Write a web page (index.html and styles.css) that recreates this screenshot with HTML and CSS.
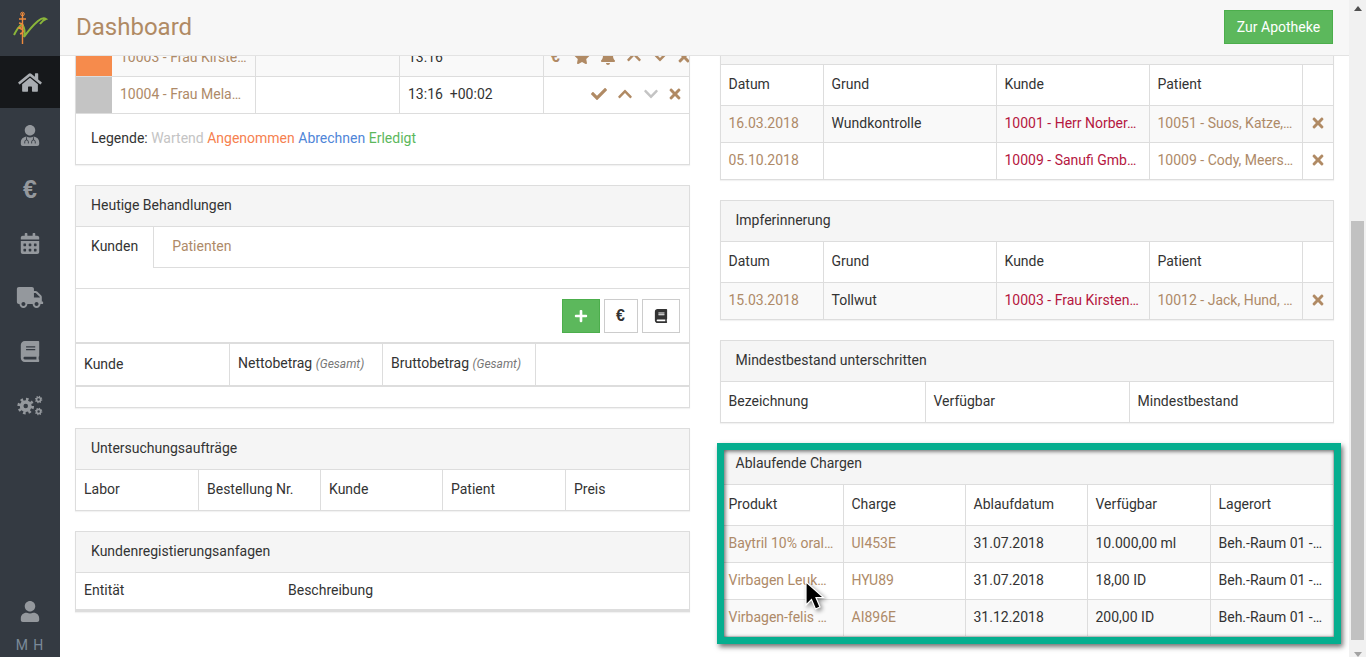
FILE: index.html
```html
<!DOCTYPE html>
<html lang="de">
<head>
    <meta charset="UTF-8">
    <meta name="viewport" content="width=device-width, initial-scale=1.0">
    <title>Dashboard</title>
    <link rel="stylesheet" href="styles.css">
</head>
<body>
    <svg class="defs" aria-hidden="true">
        <symbol id="i-check" viewBox="0 0 512 512"><path d="M173.898 439.404l-166.4-166.4c-9.997-9.997-9.997-26.206 0-36.204l36.203-36.204c9.997-9.998 26.207-9.998 36.204 0L192 312.69 432.095 72.596c9.997-9.997 26.207-9.997 36.204 0l36.203 36.204c9.997 9.997 9.997 26.206 0 36.204l-294.4 294.401c-9.998 9.997-26.207 9.997-36.204-.001z"/></symbol>
        <symbol id="i-times" viewBox="0 0 352 512"><path d="M242.72 256l100.07-100.07c12.28-12.28 12.28-32.19 0-44.48l-22.24-22.24c-12.28-12.28-32.19-12.28-44.48 0L176 189.28 75.93 89.21c-12.28-12.28-32.19-12.28-44.48 0L9.21 111.45c-12.28 12.28-12.28 32.19 0 44.48L109.28 256 9.21 356.07c-12.28 12.28-12.28 32.19 0 44.48l22.24 22.24c12.28 12.28 32.2 12.28 44.48 0L176 322.72l100.07 100.07c12.28 12.28 32.2 12.28 44.48 0l22.24-22.24c12.28-12.28 12.28-32.19 0-44.48L242.72 256z"/></symbol>
        <symbol id="i-up" viewBox="0 0 448 512"><path d="M240.971 130.524l194.343 194.343c9.373 9.373 9.373 24.569 0 33.941l-22.667 22.667c-9.357 9.357-24.522 9.375-33.901.04L224 227.495 69.255 381.516c-9.379 9.335-24.544 9.317-33.901-.04l-22.667-22.667c-9.373-9.373-9.373-24.569 0-33.941L207.03 130.525c9.372-9.373 24.568-9.373 33.941-.001z"/></symbol>
        <symbol id="i-down" viewBox="0 0 448 512"><path d="M207.029 381.476L12.686 187.132c-9.373-9.373-9.373-24.569 0-33.941l22.667-22.667c9.357-9.357 24.522-9.375 33.901-.04L224 284.505l154.745-154.021c9.379-9.335 24.544-9.317 33.901.04l22.667 22.667c9.373 9.373 9.373 24.569 0 33.941L240.971 381.476c-9.373 9.372-24.569 9.372-33.942 0z"/></symbol>
        <symbol id="i-plus" viewBox="0 0 448 512"><path d="M416 208H272V64c0-17.67-14.33-32-32-32h-32c-17.67 0-32 14.33-32 32v144H32c-17.67 0-32 14.33-32 32v32c0 17.67 14.33 32 32 32h144v144c0 17.67 14.33 32 32 32h32c17.67 0 32-14.33 32-32V304h144c17.67 0 32-14.33 32-32v-32c0-17.67-14.33-32-32-32z"/></symbol>
        <symbol id="i-star" viewBox="0 0 576 512"><path d="M259.3 17.8L194 150.2 47.9 171.5c-26.2 3.8-36.7 36.1-17.7 54.6l105.7 103-25 145.5c-4.5 26.3 23.2 46 46.4 33.7L288 439.6l130.7 68.7c23.2 12.2 50.9-7.4 46.4-33.7l-25-145.5 105.7-103c19-18.5 8.5-50.8-17.7-54.6L382 150.2 316.7 17.8c-11.7-23.6-45.6-23.9-57.4 0z"/></symbol>
        <symbol id="i-bell" viewBox="0 0 448 512"><path d="M224 512c35.32 0 63.97-28.65 63.97-64H160.03c0 35.35 28.65 64 63.97 64zm215.39-149.71c-19.32-20.76-55.47-51.99-55.47-154.29 0-77.7-54.48-139.9-127.94-155.16V32c0-17.67-14.32-32-31.98-32s-31.98 14.33-31.98 32v20.84C118.56 68.1 64.08 130.3 64.08 208c0 102.3-36.15 133.53-55.47 154.29-6 6.45-8.66 14.16-8.61 21.71.11 16.4 12.98 32 32.1 32h383.8c19.12 0 32-15.6 32.1-32 .05-7.55-2.61-15.27-8.61-21.71z"/></symbol>
        <symbol id="i-book" viewBox="0 0 448 512"><path d="M448 360V24c0-13.3-10.7-24-24-24H96C43 0 0 43 0 96v320c0 53 43 96 96 96h328c13.3 0 24-10.7 24-24v-16c0-7.5-3.5-14.3-8.9-18.7-4.2-15.4-4.2-59.3 0-74.7 5.4-4.3 8.9-11.1 8.9-18.6zM128 134c0-3.3 2.7-6 6-6h212c3.3 0 6 2.7 6 6v20c0 3.3-2.7 6-6 6H134c-3.3 0-6-2.7-6-6v-20zm0 64c0-3.3 2.7-6 6-6h212c3.3 0 6 2.7 6 6v20c0 3.3-2.7 6-6 6H134c-3.3 0-6-2.7-6-6v-20zm253.4 250H96c-17.7 0-32-14.3-32-32 0-17.6 14.4-32 32-32h285.4c-1.9 17.1-1.9 46.9 0 64z"/></symbol>
        <symbol id="i-home" viewBox="0 0 576 512"><path d="M280.37 148.26L96 300.11V464a16 16 0 0 0 16 16l112.06-.29a16 16 0 0 0 15.92-16V368a16 16 0 0 1 16-16h64a16 16 0 0 1 16 16v95.64a16 16 0 0 0 16 16.05L464 480a16 16 0 0 0 16-16V300L295.67 148.26a12.19 12.19 0 0 0-15.3 0zM571.6 251.47L488 182.56V44.05a12 12 0 0 0-12-12h-56a12 12 0 0 0-12 12v72.61L318.47 43a48 48 0 0 0-61 0L4.34 251.47a12 12 0 0 0-1.6 16.9l25.5 31A12 12 0 0 0 45.15 301l235.22-193.74a12.19 12.19 0 0 1 15.3 0L530.9 301a12 12 0 0 0 16.9-1.6l25.5-31a12 12 0 0 0-1.7-16.93z"/></symbol>
        <symbol id="i-user" viewBox="0 0 448 512"><path d="M224 256c70.7 0 128-57.3 128-128S294.7 0 224 0 96 57.3 96 128s57.3 128 128 128zm89.6 32h-16.7c-22.2 10.2-46.9 16-72.9 16s-50.6-5.8-72.9-16h-16.7C60.2 288 0 348.2 0 422.4V464c0 26.5 21.5 48 48 48h352c26.5 0 48-21.5 48-48v-41.6c0-74.2-60.2-134.4-134.4-134.4z"/></symbol>
        <symbol id="i-doctor" viewBox="0 0 448 512">
            <path d="M224 256c70.7 0 128-57.3 128-128S294.7 0 224 0 96 57.3 96 128s57.3 128 128 128zm89.6 32h-16.7c-22.2 10.2-46.9 16-72.9 16s-50.6-5.8-72.9-16h-16.7C60.2 288 0 348.2 0 422.4V464c0 26.5 21.5 48 48 48h352c26.5 0 48-21.5 48-48v-41.6c0-74.2-60.2-134.4-134.4-134.4z"/>
            <path class="steth" d="M96 450v-40a44 44 0 0 1 88 0v40M264 450v-40a44 44 0 0 1 88 0v40M140 366v-70M308 366v-70"/>
        </symbol>
        <symbol id="i-calendar" viewBox="0 0 448 512"><path d="M0 464c0 26.5 21.5 48 48 48h352c26.5 0 48-21.5 48-48V192H0v272zm320-196c0-6.6 5.4-12 12-12h40c6.6 0 12 5.4 12 12v40c0 6.6-5.4 12-12 12h-40c-6.6 0-12-5.4-12-12v-40zm0 128c0-6.6 5.4-12 12-12h40c6.6 0 12 5.4 12 12v40c0 6.6-5.4 12-12 12h-40c-6.6 0-12-5.4-12-12v-40zM192 268c0-6.6 5.4-12 12-12h40c6.6 0 12 5.4 12 12v40c0 6.6-5.4 12-12 12h-40c-6.6 0-12-5.4-12-12v-40zm0 128c0-6.6 5.4-12 12-12h40c6.6 0 12 5.4 12 12v40c0 6.6-5.4 12-12 12h-40c-6.6 0-12-5.4-12-12v-40zM64 268c0-6.6 5.4-12 12-12h40c6.6 0 12 5.4 12 12v40c0 6.6-5.4 12-12 12H76c-6.6 0-12-5.4-12-12v-40zm0 128c0-6.6 5.4-12 12-12h40c6.6 0 12 5.4 12 12v40c0 6.6-5.4 12-12 12H76c-6.6 0-12-5.4-12-12v-40zM400 64h-48V16c0-8.8-7.2-16-16-16h-32c-8.8 0-16 7.2-16 16v48H160V16c0-8.8-7.2-16-16-16h-32c-8.8 0-16 7.2-16 16v48H48C21.5 64 0 85.5 0 112v48h448v-48c0-26.5-21.5-48-48-48z"/></symbol>
        <symbol id="i-truck" viewBox="0 0 640 512"><path d="M624 352h-16V243.9c0-12.7-5.1-24.9-14.1-33.9L494 110.1c-9-9-21.2-14.1-33.9-14.1H416V48c0-26.5-21.5-48-48-48H48C21.5 0 0 21.5 0 48v320c0 26.5 21.5 48 48 48h16c0 53 43 96 96 96s96-43 96-96h128c0 53 43 96 96 96s96-43 96-96h48c8.8 0 16-7.2 16-16v-32c0-8.8-7.2-16-16-16zM160 464c-26.5 0-48-21.5-48-48s21.5-48 48-48 48 21.5 48 48-21.5 48-48 48zm320 0c-26.5 0-48-21.5-48-48s21.5-48 48-48 48 21.5 48 48-21.5 48-48 48zm80-208H416V144h44.1l99.9 99.9V256z"/></symbol>
        <symbol id="i-cogs" viewBox="0 0 640 512">
            <g class="gear">
                <circle cx="216" cy="270" r="100" stroke-width="90"/>
                <circle cx="216" cy="270" r="165" stroke-width="76" stroke-dasharray="62 67.6"/>
                <circle cx="530" cy="110" r="50" stroke-width="40"/>
                <circle cx="530" cy="110" r="76" stroke-width="30" stroke-dasharray="28 31.7"/>
                <circle cx="530" cy="402" r="50" stroke-width="40"/>
                <circle cx="530" cy="402" r="76" stroke-width="30" stroke-dasharray="28 31.7"/>
            </g>
        </symbol>
    </svg>

    <nav class="sidebar">
        <div class="logo">
            <svg width="60" height="55" viewBox="0 0 60 55">
                <path class="logo-green" d="M14 35 Q18 27 22 24 Q26 30 24 37 Q31 27 38 21 Q43 17 46 19 Q43 20 40 24"/>
                <path class="logo-orange" d="M22.5 13V44M19 19 H26M19 23 Q27 25 19 28 Q27 31 20 34"/>
                <circle class="logo-dot" cx="22.5" cy="14" r="1.8"/>
            </svg>
        </div>
        <a class="nav-item active"><svg class="nav-ico"><use href="#i-home"/></svg></a>
        <a class="nav-item"><svg class="nav-ico"><use href="#i-doctor"/></svg></a>
        <a class="nav-item"><span class="nav-euro">€</span></a>
        <a class="nav-item"><svg class="nav-ico"><use href="#i-calendar"/></svg></a>
        <a class="nav-item"><svg class="nav-ico"><use href="#i-truck"/></svg></a>
        <a class="nav-item"><svg class="nav-ico"><use href="#i-book"/></svg></a>
        <a class="nav-item"><svg class="nav-ico"><use href="#i-cogs"/></svg></a>
        <div class="nav-user">
            <svg class="nav-ico"><use href="#i-user"/></svg>
            <span class="initials">M H</span>
        </div>
    </nav>

    <div class="main">
        <header class="topbar">
            <h1>Dashboard</h1>
            <button class="btn btn-green btn-top">Zur Apotheke</button>
        </header>

        <div class="content">
            <div class="col col-left">
                <section class="panel">
                    <table class="t-queue">
                        <tr class="odd">
                            <td class="swatch orange"></td>
                            <td class="link">10003 - Frau Kirste…</td>
                            <td></td>
                            <td>13:16</td>
                            <td class="actions">
                                <div class="action-row">
                                    <span class="act-euro">€</span>
                                    <svg class="ico"><use href="#i-star"/></svg>
                                    <svg class="ico"><use href="#i-bell"/></svg>
                                    <svg class="ico"><use href="#i-up"/></svg>
                                    <svg class="ico"><use href="#i-down"/></svg>
                                    <svg class="ico"><use href="#i-times"/></svg>
                                </div>
                            </td>
                        </tr>
                        <tr>
                            <td class="swatch grey"></td>
                            <td class="link">10004 - Frau Mela…</td>
                            <td></td>
                            <td>13:16&nbsp;&nbsp;+00:02</td>
                            <td class="actions">
                                <div class="action-row end">
                                    <svg class="ico"><use href="#i-check"/></svg>
                                    <svg class="ico"><use href="#i-up"/></svg>
                                    <svg class="ico muted"><use href="#i-down"/></svg>
                                    <svg class="ico"><use href="#i-times"/></svg>
                                </div>
                            </td>
                        </tr>
                    </table>
                    <div class="legend">
                        Legende:
                        <span class="l-wait">Wartend</span>
                        <span class="l-taken">Angenommen</span>
                        <span class="l-bill">Abrechnen</span>
                        <span class="l-done">Erledigt</span>
                    </div>
                </section>

                <section class="panel">
                    <div class="panel-head">Heutige Behandlungen</div>
                    <div class="tabs">
                        <span class="tab active">Kunden</span>
                        <span class="tab link">Patienten</span>
                    </div>
                    <div class="tab-spacer"></div>
                    <div class="toolbar">
                        <button class="btn btn-green btn-icon"><svg class="ico-btn"><use href="#i-plus"/></svg></button>
                        <button class="btn btn-plain btn-icon"><span class="btn-euro">€</span></button>
                        <button class="btn btn-plain btn-icon"><svg class="ico-btn"><use href="#i-book"/></svg></button>
                    </div>
                    <table class="t-today">
                        <tr>
                            <th>Kunde</th>
                            <th>Nettobetrag <em>(Gesamt)</em></th>
                            <th>Bruttobetrag <em>(Gesamt)</em></th>
                            <th></th>
                        </tr>
                    </table>
                    <div class="empty-row"></div>
                </section>

                <section class="panel">
                    <div class="panel-head">Untersuchungsaufträge</div>
                    <table class="t-lab">
                        <tr>
                            <th>Labor</th>
                            <th>Bestellung Nr.</th>
                            <th>Kunde</th>
                            <th>Patient</th>
                            <th>Preis</th>
                        </tr>
                    </table>
                </section>

                <section class="panel">
                    <div class="panel-head">Kundenregistierungsanfagen</div>
                    <table class="t-register">
                        <tr>
                            <td>Entität</td>
                            <td>Beschreibung</td>
                        </tr>
                    </table>
                </section>
            </div>

            <div class="col col-right">
                <section class="panel">
                    <div class="panel-head">&nbsp;</div>
                    <table class="t-reminder">
                        <tr>
                            <th>Datum</th><th>Grund</th><th>Kunde</th><th>Patient</th><th></th>
                        </tr>
                        <tr class="odd">
                            <td class="link">16.03.2018</td>
                            <td>Wundkontrolle</td>
                            <td class="customer">10001 - Herr Norber…</td>
                            <td class="link">10051 - Suos, Katze,…</td>
                            <td class="center"><svg class="ico"><use href="#i-times"/></svg></td>
                        </tr>
                        <tr>
                            <td class="link">05.10.2018</td>
                            <td></td>
                            <td class="customer">10009 - Sanufi Gmb…</td>
                            <td class="link">10009 - Cody, Meers…</td>
                            <td class="center"><svg class="ico"><use href="#i-times"/></svg></td>
                        </tr>
                    </table>
                </section>

                <section class="panel">
                    <div class="panel-head">Impferinnerung</div>
                    <table class="t-reminder">
                        <tr>
                            <th>Datum</th><th>Grund</th><th>Kunde</th><th>Patient</th><th></th>
                        </tr>
                        <tr class="odd">
                            <td class="link">15.03.2018</td>
                            <td>Tollwut</td>
                            <td class="customer">10003 - Frau Kirsten…</td>
                            <td class="link">10012 - Jack, Hund, …</td>
                            <td class="center"><svg class="ico"><use href="#i-times"/></svg></td>
                        </tr>
                    </table>
                </section>

                <section class="panel">
                    <div class="panel-head">Mindestbestand unterschritten</div>
                    <table class="t-stock">
                        <tr>
                            <th>Bezeichnung</th><th>Verfügbar</th><th>Mindestbestand</th>
                        </tr>
                    </table>
                </section>

                <section class="panel highlighted">
                    <div class="panel-head">Ablaufende Chargen</div>
                    <table class="t-batches">
                        <tr>
                            <th>Produkt</th><th>Charge</th><th>Ablaufdatum</th><th>Verfügbar</th><th>Lagerort</th>
                        </tr>
                        <tr class="odd">
                            <td class="link">Baytril 10% oral…</td>
                            <td class="link">UI453E</td>
                            <td>31.07.2018</td>
                            <td>10.000,00 ml</td>
                            <td>Beh.-Raum 01 -…</td>
                        </tr>
                        <tr>
                            <td class="link">Virbagen Leuk…</td>
                            <td class="link">HYU89</td>
                            <td>31.07.2018</td>
                            <td>18,00 ID</td>
                            <td>Beh.-Raum 01 -…</td>
                        </tr>
                        <tr class="odd">
                            <td class="link">Virbagen-felis …</td>
                            <td class="link">AI896E</td>
                            <td>31.12.2018</td>
                            <td>200,00 ID</td>
                            <td>Beh.-Raum 01 -…</td>
                        </tr>
                    </table>
                </section>
            </div>
        </div>
    </div>

    <div class="scrollbar">
        <span class="arrow-up"></span>
        <span class="thumb"></span>
        <span class="arrow-down"></span>
    </div>

    <svg class="cursor" width="20" height="30" viewBox="0 0 20 30">
        <path d="M1 1V24L6.5 18.5 10.5 28 15 26 11 16.5H18.5Z"/>
    </svg>
</body>
</html>
```

FILE: styles.css
```css
* {
    box-sizing: border-box;
}
html, body {
    height: 100%;
}
body {
    margin: 0;
    display: flex;
    height: 657px;
    overflow: hidden;
    background-color: #fff;
    color: #333;
    font-family: Roboto, "Liberation Sans", sans-serif;
    font-size: 14px;
    line-height: 20px;
}
.defs {
    display: none;
}

/* sidebar */
.sidebar {
    width: 60px;
    flex: none;
    display: flex;
    flex-direction: column;
    background-color: #343a42;
}
.logo {
    height: 56px;
    flex: none;
}
.logo svg {
    display: block;
}
.logo-green {
    fill: none;
    stroke: #8ab53a;
    stroke-width: 2;
}
.logo-orange {
    fill: none;
    stroke: #ee8a3c;
    stroke-width: 1.4;
}
.logo-dot {
    fill: none;
    stroke: #ee8a3c;
    stroke-width: 1;
}
.nav-item {
    height: 54px;
    flex: none;
    display: flex;
    align-items: center;
    justify-content: center;
}
.nav-item.active {
    height: 52px;
    background-color: #16181b;
}
.nav-item.active .nav-ico {
    fill: #a9adb2;
}
.nav-ico {
    width: 28px;
    height: 21px;
    fill: #94989d;
}
.steth {
    fill: none;
    stroke: #343a42;
    stroke-width: 22;
}
.gear circle {
    fill: none;
    stroke: #94989d;
}
.nav-euro {
    color: #94989d;
    font-family: "Liberation Sans", sans-serif;
    font-size: 25px;
    font-weight: bold;
}
.nav-user {
    margin-top: auto;
    display: flex;
    flex-direction: column;
    align-items: center;
    gap: 13px;
    padding-bottom: 2px;
}
.initials {
    color: #7b8a99;
    font-size: 14px;
    letter-spacing: 1px;
}

/* main area */
.main {
    flex: 1;
    min-width: 0;
    height: 657px;
    overflow: hidden;
}
.topbar {
    position: relative;
    z-index: 2;
    height: 56px;
    display: flex;
    align-items: center;
    justify-content: space-between;
    padding: 0 16px 1px 16px;
    background-color: #f7f7f7;
    border-bottom: 1px solid #e3e3e3;
}
.topbar h1 {
    margin: 0;
    color: #b08a64;
    font-size: 24px;
    font-weight: 400;
}
.content {
    display: flex;
    gap: 30px;
    margin-top: -33px;
    padding: 0 15px;
}
.col {
    flex: 1;
    min-width: 0;
}
.col-left {
    padding-top: 16px;
}

/* panels */
.panel {
    margin-bottom: 20px;
    background-color: #fff;
    border: 1px solid #ddd;
    box-shadow: 0 1px 1px rgba(0, 0, 0, .05);
}
.panel-head {
    padding: 9px 15px 11px;
    background-color: #f5f5f5;
    border-bottom: 1px solid #ddd;
}

/* tables */
table {
    width: 100%;
    table-layout: fixed;
    border-collapse: separate;
    border-spacing: 0;
}
th, td {
    border-right: 1px solid #ddd;
    border-bottom: 1px solid #ddd;
    text-align: left;
    font-weight: 400;
    white-space: nowrap;
    overflow: hidden;
}
th {
    padding: 9px 8px 11px;
}
td {
    padding: 7px 8px 9px;
}
th:last-child, td:last-child {
    border-right: none;
}
tr:last-child > th, tr:last-child > td {
    border-bottom: none;
}
tr.odd td {
    background-color: #f9f9f9;
}
.link {
    color: #ae8a68;
}
.customer {
    color: #b5173f;
}
td.center {
    padding: 8px 0;
}
.center .ico {
    display: block;
    margin: 1px auto 3px;
}
em {
    color: #777;
    font-size: 12px;
}

.t-queue td:nth-child(1) { width: 36px; }
.t-queue td:nth-child(2) { width: 144px; }
.t-queue td:nth-child(3) { width: 144px; }
.t-queue td:nth-child(4) { width: 144px; }
.t-queue tr:last-child td {
    border-bottom: 1px solid #ddd;
}
td.swatch {
    padding: 0;
    border-right: none;
}
tr.odd td.swatch.orange {
    background-color: #f68b4c;
}
td.swatch.grey {
    background-color: #c4c4c4;
}
td.actions {
    padding: 7px 0 9px 7px;
}
.action-row {
    display: flex;
    align-items: center;
    gap: 10px;
    height: 20px;
}
.action-row.end {
    justify-content: flex-end;
    padding-right: 6px;
}
.action-row .ico:last-child {
    margin-left: -2px;
}
.act-euro {
    width: 13px;
    flex: none;
    color: #b08a64;
    font-size: 16px;
    font-weight: bold;
    font-family: "Liberation Sans", sans-serif;
}
.ico {
    width: 16px;
    height: 16px;
    flex: none;
    fill: #b08a64;
}
.ico.muted {
    fill: #c4c4c4;
}

.legend {
    padding: 14px 15px 16px;
}
.l-wait { color: #c4c4c4; }
.l-taken { color: #f6814f; }
.l-bill { color: #4f86d8; }
.l-done { color: #5cb85c; }

.tabs {
    display: flex;
    height: 41px;
    border-bottom: 1px solid #ddd;
}
.tab {
    padding: 9px 15px 0;
}
.tab.active {
    height: 41px;
    background-color: #fff;
    border-right: 1px solid #ddd;
}
.tab.link {
    margin-left: 3px;
}
.tab-spacer {
    height: 21px;
    border-bottom: 1px solid #ddd;
}
.toolbar {
    display: flex;
    justify-content: flex-end;
    gap: 4px;
    padding: 10px 9px 9px 0;
}

/* buttons */
.btn {
    border: 1px solid #ccc;
    border-radius: 0;
    font-family: inherit;
    font-size: 14px;
    line-height: 20px;
}
.btn-green {
    color: #fff;
    background-color: #5cb85c;
    border-color: #4cae4c;
}
.btn-plain {
    color: #333;
    background-color: #fff;
}
.btn-top {
    width: 109px;
    height: 34px;
    padding: 0;
}
.btn-icon {
    height: 34px;
    width: 34px;
    padding: 0;
    display: flex;
    align-items: center;
    justify-content: center;
}
.btn-green.btn-icon {
    width: 38px;
}
.btn-plain.btn-icon:last-child {
    width: 38px;
}
.ico-btn {
    width: 14px;
    height: 14px;
    fill: #333;
}
.btn-green .ico-btn {
    fill: #fff;
}
.btn-euro {
    font-size: 16px;
    font-weight: bold;
    font-family: "Liberation Sans", sans-serif;
}

.t-today {
    border-top: 2px solid #ddd;
    border-bottom: 2px solid #ddd;
}
.t-today th:nth-child(1) { width: 154px; }
.t-today th:nth-child(2) { width: 153px; }
.t-today th:nth-child(3) { width: 153px; }
.empty-row {
    height: 20px;
}

.t-lab th:nth-child(1) { width: 123px; }
.t-lab th:nth-child(2) { width: 122px; }
.t-lab th:nth-child(3) { width: 122px; }
.t-lab th:nth-child(4) { width: 123px; }

.t-register {
    border-bottom: 2px solid #ddd;
}
.t-register td {
    border: none;
}
.t-register td:first-child { width: 204px; }

.t-reminder th:nth-child(1) { width: 103px; }
.t-reminder th:nth-child(2) { width: 173px; }
.t-reminder th:nth-child(3) { width: 153px; }
.t-reminder th:nth-child(4) { width: 153px; }

.t-stock th:nth-child(1) { width: 205px; }
.t-stock th:nth-child(2) { width: 204px; }

.t-batches th:nth-child(1) { width: 123px; }
.t-batches th:nth-child(2) { width: 122px; }
.t-batches th:nth-child(3) { width: 122px; }
.t-batches th:nth-child(4) { width: 123px; }

/* teal marker over the last panel */
.highlighted {
    position: relative;
    margin-bottom: 0;
}
.highlighted::after {
    content: "";
    position: absolute;
    left: -4px;
    right: -8px;
    top: -1px;
    bottom: -8px;
    border: 7px solid #05ae8f;
    box-shadow: 2px 3px 5px rgba(0, 0, 0, .55), inset 1px 1px 4px rgba(0, 0, 0, .65);
    pointer-events: none;
}

/* page scrollbar */
.scrollbar {
    width: 17px;
    flex: none;
    display: flex;
    flex-direction: column;
    align-items: center;
    background-color: #f1f1f1;
    padding-top: 6px;
}
.thumb {
    width: 13px;
    height: 419px;
    margin-top: 210px;
    background-color: #c1c1c1;
}
.arrow-up {
    width: 0;
    height: 0;
    border: 4px solid transparent;
    border-top: none;
    border-bottom: 5px solid #505050;
}
.arrow-down {
    width: 0;
    height: 0;
    margin-top: 12px;
    border: 4px solid transparent;
    border-bottom: none;
    border-top: 5px solid #a3a3a3;
}

/* mouse pointer in the screenshot */
.cursor {
    position: absolute;
    left: 805px;
    top: 581px;
    z-index: 3;
    filter: drop-shadow(2px 2px 2px rgba(0, 0, 0, .45));
}
.cursor path {
    fill: #000;
    stroke: #fff;
    stroke-width: 1.2;
}
```
